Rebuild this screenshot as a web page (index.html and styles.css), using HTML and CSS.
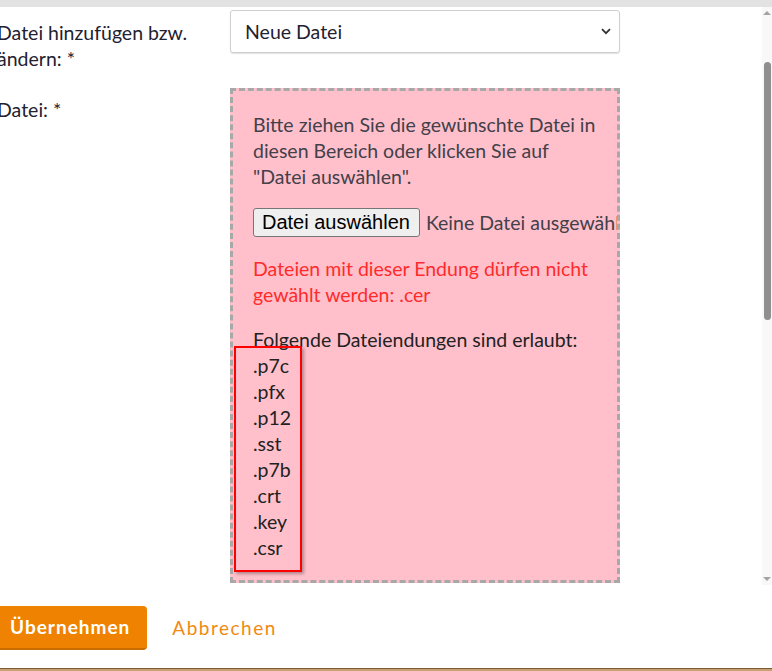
FILE: index.html
```html
<!DOCTYPE html>
<html lang="de">
<head>
<meta charset="utf-8">
<title>Datei hinzufügen</title>
<link rel="stylesheet" href="styles.css">
</head>
<body>
<div class="topbar"></div>
<div class="viewport">
  <div class="content">
    <div class="row row-first">
      <label class="label">Datei hinzufügen bzw. ändern: *</label>
      <div class="field">
        <div class="select">
          <span>Neue Datei</span>
          <svg class="chevron" width="10" height="7" viewBox="0 0 10 7"><path d="M1 1.2 L5 5.2 L9 1.2" fill="none" stroke="#333" stroke-width="1.8"/></svg>
        </div>
      </div>
    </div>
    <div class="row row-second">
      <label class="label label-file">Datei: *</label>
      <div class="field">
        <div class="dropzone">
          <p class="hint">Bitte ziehen Sie die gewünschte Datei in diesen Bereich oder klicken Sie auf "Datei auswählen".</p>
          <div class="file-row"><span class="file-btn">Datei auswählen</span><span class="file-name">Keine Datei ausgewählt</span></div>
          <p class="error">Dateien mit dieser Endung dürfen nicht gewählt werden: .cer</p>
          <p class="allowed">Folgende Dateiendungen sind erlaubt:</p>
          <ul class="ext-list">
            <li>.p7c</li>
            <li>.pfx</li>
            <li>.p12</li>
            <li>.sst</li>
            <li>.p7b</li>
            <li>.crt</li>
            <li>.key</li>
            <li>.csr</li>
          </ul>
        </div>
      </div>
    </div>
  </div>
  <div class="scrollbar">
    <div class="arrow arrow-up"></div>
    <div class="track"><div class="thumb"></div></div>
    <div class="arrow arrow-down"></div>
  </div>
</div>
<div class="actions">
  <span class="btn-primary">Übernehmen</span>
  <span class="btn-link">Abbrechen</span>
</div>
<div class="bottomline"></div>
</body>
</html>
```
FILE: styles.css
```css
html, body {
  margin: 0;
  padding: 0;
  background: #fff;
}
body {
  width: 772px;
  height: 671px;
  overflow: hidden;
  font-family: Lato, "Open Sans", sans-serif;
  font-size: 19.5px;
  line-height: 26px;
  color: #222;
}
.topbar {
  height: 7px;
  background: #e2e2e2;
}
.viewport {
  display: flex;
  height: 578px;
  overflow: hidden;
}
.content {
  flex: 1;
  margin-left: -3px;
  padding-top: 3px;
}
.row {
  display: grid;
  grid-template-columns: 233px 390px;
}
.row-second {
  margin-top: 16px;
}
.label {
  display: block;
  padding-right: 30px;
  color: #1f2230;
}
.row-first .label {
  padding-top: 10px;
}
.label-file {
  padding-top: 9px;
}
.select {
  height: 41px;
  border: 1px solid #cfcfcf;
  border-radius: 3px;
  box-shadow: 0 1px 1px rgba(0,0,0,0.12);
  display: flex;
  align-items: center;
  justify-content: space-between;
  padding: 0 8px 0 14px;
  color: #1f2230;
}
.chevron {
  display: block;
}
.dropzone {
  box-sizing: border-box;
  height: 495px;
  border: 3px dashed #a8a8a8;
  background: #ffc0cb;
  padding: 21px 0 0 20px;
  overflow: hidden;
  color: #43404a;
}
.dropzone p {
  margin: 0;
  padding-right: 20px;
}
.file-row {
  margin-top: 18px;
  display: flex;
  align-items: center;
  white-space: nowrap;
}
.file-btn {
  font-family: "Liberation Sans", Arial, sans-serif;
  font-size: 20px;
  line-height: 23px;
  color: #000;
  background: #efefef;
  border: 1px solid #767676;
  border-radius: 3px;
  padding: 2px 9px 2px 8px;
}
.file-name {
  margin-left: 6px;
}
.error {
  margin-top: 19px !important;
  color: #ff2b2b;
}
.allowed {
  margin-top: 19px !important;
  color: #222;
}
.ext-list {
  list-style: none;
  margin: -7px 0 0 -19px;
  padding: 5px 0 9px 17px;
  width: 47px;
  border: 2px solid #ff0000;
  box-shadow: 2px 2px 3px rgba(0,0,0,0.3);
  color: #222;
  position: relative;
}
.scrollbar {
  width: 10px;
  background: #f8f8f8;
  display: flex;
  flex-direction: column;
  align-items: center;
}
.arrow {
  width: 0;
  height: 0;
  border-left: 4px solid transparent;
  border-right: 4px solid transparent;
}
.arrow-up {
  margin-top: 4px;
  border-bottom: 4px solid #a3a3a3;
}
.arrow-down {
  margin-bottom: 4px;
  border-top: 4px solid #a3a3a3;
}
.track {
  flex: 1;
  width: 100%;
  padding-top: 47px;
  box-sizing: border-box;
}
.thumb {
  width: 7px;
  margin-left: 2px;
  height: 258px;
  background: #8f8f8f;
  border-radius: 4px;
}
.actions {
  display: flex;
  align-items: center;
  margin-top: 21px;
  margin-left: -3px;
  height: 44px;
}
.btn-primary {
  display: inline-block;
  height: 44px;
  line-height: 42px;
  box-sizing: border-box;
  padding: 0 17px 0 13px;
  background: #ef8200;
  border-bottom: 2px solid #c96d00;
  border-radius: 4px;
  color: #fff;
  font-weight: 700;
  font-size: 19px;
  letter-spacing: 1px;
}
.btn-link {
  margin-left: 25px;
  color: #f08a12;
  font-size: 19px;
  letter-spacing: 1.5px;
}
.bottomline {
  margin-top: 18px;
  height: 3px;
  background: linear-gradient(#7a5a3a 0 1px, #c9a070 1px);
}
```
